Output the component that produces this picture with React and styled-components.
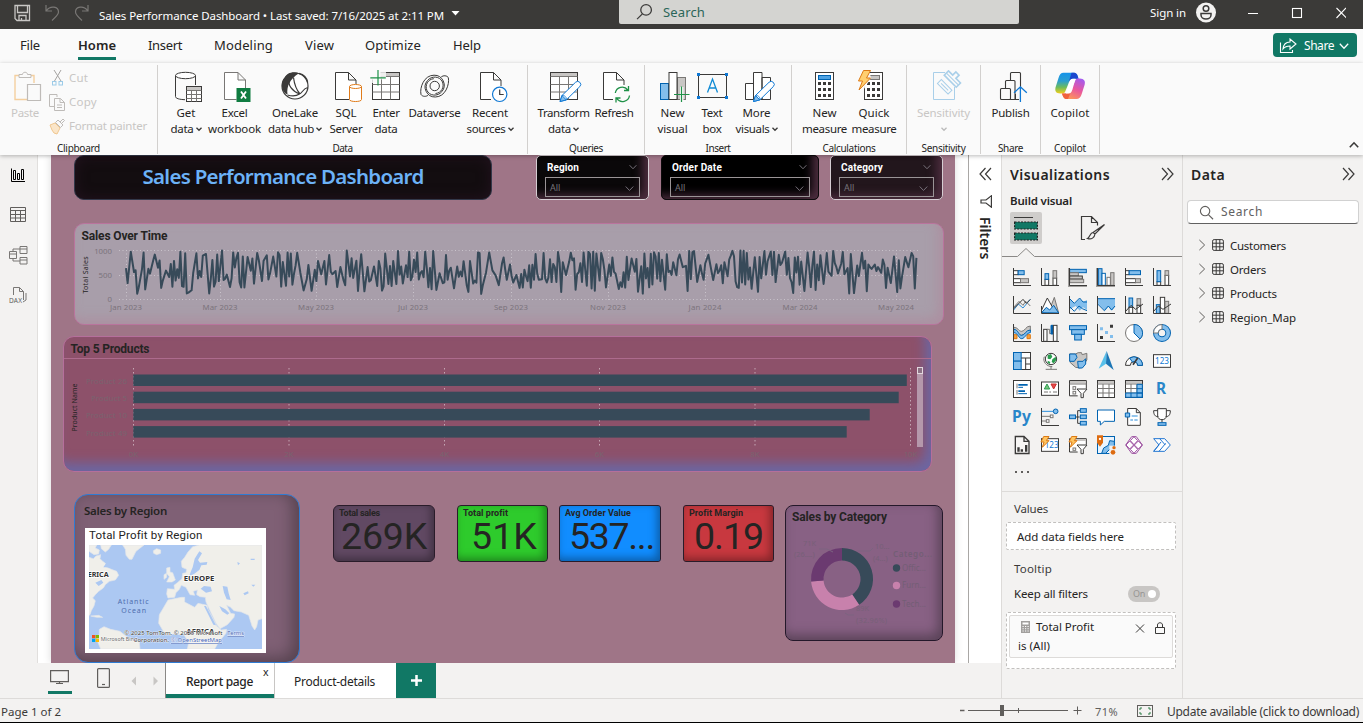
import React, { useLayoutEffect, useRef, useState } from "react";
import styled, { createGlobalStyle, css } from "styled-components";

const INK = "#3b3a39";
const BLUE = "#0063b1";
const SKY = "#83beec";
const GREY = "#797775";
const SILVER = "#c8c6c4";
const GREEN = "#117865";
const TEAL = "#374a59";
const UI = '"Noto Sans", "Open Sans", sans-serif';
const DIN = 'Roboto, "Noto Sans", sans-serif';

const Global = createGlobalStyle`
  * { box-sizing: border-box; }
  body { margin: 0; overflow: hidden; background: #f3f2f1; font-family: ${UI}; color: #252423; }
  svg { display: block; flex: none; }
`;

/* ---------- text that tracks itself to a given width ---------- */
const Span = styled.span`
  display: block;
  width: fit-content;
  flex: none;
  white-space: pre;
  font-family: ${(p) => (p.$din ? DIN : UI)};
  font-size: ${(p) => p.$size || 11.5}px;
  font-weight: ${(p) => p.$weight || 400};
  color: ${(p) => p.$color || "inherit"};
  line-height: ${(p) => p.$lh || 16}px;
`;
function Text({ w, size, weight, color, lh, din, children }) {
  const ref = useRef(null);
  const [spacing, setSpacing] = useState(0);
  useLayoutEffect(() => {
    if (!w) return;
    setSpacing((w - ref.current.getBoundingClientRect().width) / String(children).length);
  }, [w, children]);
  return (
    <Span ref={ref} $size={size} $weight={weight} $color={color} $lh={lh} $din={din} style={{ letterSpacing: spacing }}>
      {children}
    </Span>
  );
}

/* ---------- shell ---------- */
const Shell = styled.div`
  width: 1363px;
  height: 723px;
  display: flex;
  flex-direction: column;
  overflow: hidden;
  background: #f3f2f1;
`;
const Spacer = styled.div`
  flex: ${(p) => (p.$w ? "none" : 1)};
  width: ${(p) => (p.$w ? p.$w + "px" : "auto")};
`;

/* ---------- title bar ---------- */
const TitleBar = styled.header`
  flex: none;
  height: 29px;
  display: flex;
  background: #3b3a38;
  color: #fff;
`;
const TitleLeft = styled.div`
  width: 619px;
  display: flex;
  align-items: flex-start;
  padding: 4px 0 0 13px;
`;
const TitleText = styled.div`
  display: flex;
  align-items: center;
  gap: 7px;
  padding: 3px 0 0 8px;
`;
const TopSearch = styled.div`
  width: 400px;
  height: 24px;
  display: flex;
  align-items: center;
  gap: 10px;
  padding: 0 0 1px 17px;
  background: #d4d4d1;
  border-radius: 0 0 2px 2px;
`;
const TitleRight = styled.div`
  flex: 1;
  height: 25px;
  display: flex;
  align-items: center;
  padding-left: 131px;
`;

/* ---------- menu ---------- */
const Menu = styled.nav`
  flex: none;
  height: 34px;
  display: flex;
  background: #fafafa;
  padding: 4px 6px 0 20px;
`;
const MenuTab = styled.div`
  width: ${(p) => p.$w}px;
  margin-right: ${(p) => p.$gap}px;
  height: 27px;
  padding-top: 2px;
  border-bottom: 3px solid ${(p) => (p.$on ? GREEN : "transparent")};
`;
const ShareButton = styled.button`
  width: 84px;
  height: 24px;
  display: flex;
  align-items: center;
  padding: 1px 8px 0 6px;
  border: 0;
  border-radius: 4px;
  background: ${GREEN};
  color: #fff;
`;

/* ---------- ribbon ---------- */
const Ribbon = styled.section`
  flex: none;
  height: 92px;
  display: flex;
  background: #fafafa;
  z-index: 2;
  box-shadow: 0 1px 4px rgba(0, 0, 0, 0.28);
`;
const Group = styled.div`
  width: ${(p) => p.$w}px;
  height: 89px;
  margin-top: 2px;
  display: flex;
  flex-direction: column;
  align-items: center;
  border-right: 1px solid #d2d0ce;
`;
const GroupBody = styled.div`
  height: 74px;
  width: 100%;
  flex: none;
  display: flex;
  padding: 5px 0 0 ${(p) => p.$pad || 0}px;
  justify-content: ${(p) => (p.$pad ? "flex-start" : "center")};
`;
const Button = styled.div`
  width: ${(p) => p.$w}px;
  flex: none;
  display: flex;
  flex-direction: column;
  align-items: center;
  color: ${(p) => (p.$off ? "#c8c6c4" : "#252423")};
  > svg { margin-bottom: 1px; }
`;
const ButtonLine = styled.div`
  height: 16px;
  display: flex;
  align-items: center;
  gap: 2px;
`;
const SideActions = styled.div`
  display: flex;
  flex-direction: column;
  margin: -4px 0 0 4px;
`;
const SideAction = styled.div`
  height: 24px;
  display: flex;
  align-items: center;
  gap: 4px;
`;
const CollapseSlot = styled.div`
  flex: 1;
  display: flex;
  align-items: flex-end;
  justify-content: flex-end;
  padding: 0 4px 5px 0;
`;

function Chevron({ size = 7, color = INK, sw = 1.3, dir = "down" }) {
  const rot = { down: 0, up: 180, right: -90, left: 90 }[dir];
  return (
    <svg width={size} height={size} viewBox="0 0 10 10" fill="none" stroke={color} strokeWidth={(sw * 10) / size}>
      <path d="M.8 2.8 5 7.2 9.2 2.8" transform={`rotate(${rot} 5 5)`} />
    </svg>
  );
}

const Pencil = ({ x }) => (
  <g transform={`translate(${x} 0)`}>
    <path d="M0 31.5 2 25.5 15.5 12.3a3 3 0 0 1 4.3 4.3L6.3 29.9Z" fill="#fff" stroke="#0f78d4" />
    <path d="M0 31.5 2 25.5 6.3 29.9Z" fill={SKY} stroke="#0f78d4" />
    <path d="M2 25.5c2.2-.6 5 1.6 4.3 4.4" fill="none" stroke="#0f78d4" strokeWidth=".8" />
  </g>
);
const Calc = ({ x, top = "#4ea2e3" }) => (
  <g>
    <rect x={x} y="2.5" width="18" height="27" fill="#fff" stroke={INK} />
    <rect x={x + 3} y="5.5" width="12" height="4" fill={top} stroke={top === SILVER ? GREY : BLUE} />
    {[12, 18, 24].map((y) =>
      [3, 8, 13].map((dx) => <rect key={y + "-" + dx} x={x + dx - 0.5} y={y} width="3" height="3" fill={INK} />)
    )}
  </g>
);

const ribbonArt = {
  get: (
    <>
      <path d="M9.5 5.5v21c0 2 4 3 9.5 3.2M29.5 5.5V15" fill="none" stroke={INK} />
      <ellipse cx="19.5" cy="5.5" rx="10" ry="3.2" fill="#fff" stroke={INK} />
      <rect x="20.5" y="16.5" width="15" height="15" fill="#fff" stroke={INK} />
      <path d="M21 17h14v3H21z" fill={SILVER} />
      <path d="M20.5 20.5h15M20.5 24.5h15M20.5 28.5h15M25.5 20v11.5M30.5 20v11.5" stroke={GREY} />
    </>
  ),
  excel: (
    <>
      <path d="M21.5 29.5H9.5v-27H23l7.500 7.500v8M23 2.500V10h7.500" fill="#fff" stroke={GREY} />
      <rect x="21.5" y="18" width="14" height="14" fill="#107c41" />
      <path d="m26 21.500 5 7M31 21.500l-5 7" stroke="#fff" strokeWidth="1.8" />
    </>
  ),
  onelake: (
    <>
      <circle cx="20" cy="16" r="13" fill="#fff" stroke={INK} strokeWidth="1.2" />
      <path d="M24 3.300C19 1 11 2.500 9.500 8.500 5 12 6.500 23 12.500 24.500c-1-8 2-15 11.500-21.200Z" fill={INK} />
      <path d="M14.500 9.500c-2 5.500 2.500 11.500 10 14.500 3-1 3-5 8.200-6.500M18.500 7.500c1 8 3.500 13 6.500 16.500M24 3.300c5 1.200 8 5 8.700 9M12.500 25c5 1.500 9 1 12-1" fill="none" stroke={INK} strokeWidth="1.2" />
    </>
  ),
  sql: (
    <>
      <path d="M23 29.500H9.500v-27h13l7.500 7.500v4M22.500 2.500V10H30" fill="#fff" stroke={INK} />
      <path d="M23.500 16.500v13c0 2.700 12 2.700 12 0v-13" fill="#fff" stroke="#e07b1a" />
      <ellipse cx="29.5" cy="16.5" rx="6" ry="2" fill="#fff" stroke="#e07b1a" />
    </>
  ),
  enter: (
    <>
      <rect x="6.5" y="2.5" width="27" height="27" fill="#fff" stroke={INK} />
      <path d="M7 3h26v3.500H7z" fill={SILVER} />
      <path d="M6.500 6.500h27M6.500 14.500h27M6.500 22h27M15.500 6.500v23M24.500 6.500v23" stroke={GREY} />
      <path d="M4 1h10.500v8.500H4z" fill="#fafafa" />
      <path d="M14 1h6v8.500h-6zM4 9h10.500v4H4z" fill="#fafafa" opacity=".8" />
      <path d="M12 0v15.500M4.300 7.800h15.500" stroke="#1f9148" strokeWidth="1.2" />
    </>
  ),
  dataverse: (
    <g fill="none" stroke={INK}>
      <path d="M33.300 7.500c1.500 7-3 19.500-13 19.500a10 10 0 0 1-7.800-16.500c4-5 12.500-4.500 15 1.500 2 5-1 11-7 11.500M6 24.500C4.500 17.500 9 5.200 19 5.200a10 10 0 0 1 7.800 16.500c-4 5-12.500 4.500-15-1.500-2-5 1-11 7-11.500" />
      <path d="M26.300 6.800c2-1.500 5.500-1.500 7 .7M13 25.300c-2 1.500-5.500 1.500-7-.8" />
      <circle cx="19.7" cy="16" r="4.7" />
    </g>
  ),
  recent: (
    <>
      <path d="M21 29.500H10.500v-27h13L31 10v6M23.500 2.500V10H31" fill="#fff" stroke={INK} />
      <circle cx="29.7" cy="24.3" r="7.2" fill="#fff" stroke="#0f78d4" strokeWidth="1.2" />
      <path d="M29.700 19.500v5h4" fill="none" stroke={INK} strokeWidth="1.2" />
    </>
  ),
  transform: (
    <>
      <rect x="6.5" y="2.5" width="27" height="27" fill="#fff" stroke={INK} />
      <path d="M7 3h26v3.500H7z" fill={SILVER} />
      <path d="M6.500 6.500h27M6.500 14.500h27M6.500 22h27M15.500 6.500v23M24.500 6.500v23" stroke={GREY} />
      <Pencil x={16} />
    </>
  ),
  refresh: (
    <>
      <path d="M19 29.500H9.500v-27h13L30 10v5M22.500 2.500V10H30" fill="#fff" stroke={INK} />
      <path d="M21.300 23a7 7 0 0 1 12.500-3M35.500 25.500a7 7 0 0 1-12.700 3M34.500 16v4.500H30M22 32.500V28h4.500" fill="none" stroke="#1f9148" strokeWidth="1.3" />
    </>
  ),
  newVisual: (
    <>
      <rect x="24.5" y="7.5" width="8" height="22" fill={SILVER} stroke={GREY} />
      <rect x="7.5" y="13.5" width="8" height="16" fill={SKY} stroke={BLUE} />
      <rect x="16" y="2.5" width="8" height="27" fill="#fff" stroke={INK} />
      <path d="M27 17h3.500v13H27z" fill="#fafafa" />
      <path d="M28.500 16.500V32M21 24.500h15.500" stroke="#1f9148" strokeWidth="1.2" />
    </>
  ),
  textBox: (
    <>
      <rect x="6.500" y="4.5" width="28" height="23" fill="#fafafa" stroke={INK} />
      <path d="M5 3h3v3H5zM33 3h3v3h-3zM5 26h3v3H5zM33 26h3v3h-3z" fill="#0f78d4" />
      <path d="m15.500 22.500 5-13.500 5 13.500M17.200 18h6.700" fill="none" stroke="#0f8ad4" strokeWidth="1.3" />
    </>
  ),
  moreVisuals: (
    <>
      <path d="M8.500 13.500h8v16h-8zM16.500 2.500h8.500v27h-8.500zM25 7.500h8.500v22H25z" fill="#fff" stroke={INK} />
      <Pencil x={16.5} />
    </>
  ),
  measure: <Calc x={10.5} />,
  quick: (
    <>
      <Calc x={10.5} top={SILVER} />
      <path d="M3 0h12l2 8-9 14H3z" fill="#fafafa" opacity=".95" />
      <path d="M9.500.5h7L12.500 8h4L5 20l3.500-9h-4Z" fill="#ffcf70" stroke="#dd7a14" />
    </>
  ),
  sensitivity: (
    <g fill="none" stroke="#a9cfe9">
      <path d="M21 2.500H9.500v27h21V17" />
      <g transform="rotate(45 20.500 17)"><rect x="13" y="14" width="15" height="5.5" /><path d="M15.500 16.800h10" /></g>
      <g transform="rotate(45 28 8)">
        <path d="M20.500 5.500h6V1h4.500v4.500h6.500v6h-17z" strokeWidth="1.6" /><path d="M21 8.500h16" />
      </g>
    </g>
  ),
  publish: (
    <>
      <g fill="#fafafa" stroke={INK} strokeWidth="1.1">
        <path d="M19.500 29.500v-26q0-1 1-1h8q1 0 1 1v26z" />
        <path d="M14.500 29.500v-18q0-1 1-1h7.500q1 0 1 1v18z" />
        <rect x="9.5" y="18.5" width="10" height="11" rx="1" />
      </g>
      <path d="M25.500 17h9v15h-9z" fill="#fafafa" />
      <path d="M29.400 17v15M23 22.800l6.400-6 6.400 6" fill="none" stroke="#0f78d4" strokeWidth="1.3" />
      <path d="M24.500 24v5.500H28" fill="none" stroke={INK} />
    </>
  ),
  copilot: (
    <>
      <defs>
        <linearGradient id="cpA" x1="0" y1="0" x2="0" y2="1">
          <stop offset="0" stopColor="#1593ea" /><stop offset=".4" stopColor="#2b9ed0" /><stop offset=".7" stopColor="#6dbb5c" /><stop offset="1" stopColor="#f2cf1b" />
        </linearGradient>
        <linearGradient id="cpB" x1=".8" y1="0" x2=".3" y2="1">
          <stop offset="0" stopColor="#a35bf0" /><stop offset=".5" stopColor="#e9589d" /><stop offset="1" stopColor="#ff9a55" />
        </linearGradient>
      </defs>
      <g transform="translate(-.5 0)">
        <path d="M14 2.700h9.500c3 0 4.500 1.500 5.500 6h-5c-3 0-4.500 2-5.500 6L15.500 22c-.6 1-2 1.500-3 1.500-5 0-7.500-1-6.500-6l3-9.500c1-3.500 2.500-5.300 5-5.300Z" fill="url(#cpA)" />
        <path d="M22 2.700h2c3 0 4 1.500 5 6h-5c-2.500 0-4 1.500-5 4Z" fill="#1b48cf" />
        <path d="M27 29h-9.500c-3 0-4-2-5-5.500h4.500c3 0 4.500-2 5.500-6L26 10c.5-1 1.500-1.500 2.500-1.500 5 0 7.700 1 6.700 6l-3 9.500c-1 3.500-2.700 5-5.200 5Z" fill="url(#cpB)" />
        <path d="M12.500 23.500h4.500c2.500 0 4-1 5-3.500L18.500 29h-1c-3 0-4-2-5-5.500Z" fill="#f0623c" />
        <path d="M20.500 10.500q.8-1.700 2.500-1.700h3l-3 10.500-1 2.500q-.8 1.700-2.500 1.700h-3Z" fill="#fff" />
      </g>
    </>
  ),
};

function RibbonButton({ w, icon, lines, off, arrow }) {
  return (
    <Button $w={w} $off={off}>
      <svg width="40" height="34" viewBox="0 0 40 34">{ribbonArt[icon]}</svg>
      {lines.map(([t, tw], i) => (
        <ButtonLine key={i}>
          {t && <Text w={tw}>{t}</Text>}
          {arrow && i === lines.length - 1 && <Chevron size={6} color={off ? "#bbb" : INK} />}
        </ButtonLine>
      ))}
    </Button>
  );
}
function RibbonGroup({ w, pad, name, nameWidth, children }) {
  return (
    <Group $w={w}>
      <GroupBody $pad={pad}>{children}</GroupBody>
      <Text w={nameWidth} size={10} lh={18}>{name}</Text>
    </Group>
  );
}

/* ---------- workspace ---------- */
const Main = styled.main`
  flex: 1;
  min-height: 0;
  display: flex;
`;
const Center = styled.div`
  width: 1001px;
  display: flex;
  flex-direction: column;
`;
const Stage = styled.div`
  height: 508px;
  display: flex;
  background: #fff;
`;
const Rail = styled.div`
  width: 38px;
  display: flex;
  flex-direction: column;
  align-items: center;
  background: #f3f2f1;
  border-right: 1px solid #e1dfdd;
  padding: 11px 2px 0 0;
`;
const RailSlot = styled.div`
  height: 40px;
  svg { margin-left: 1px; }
`;
const Report = styled.div`
  width: 904px;
  margin: 0 13px;
  display: flex;
  flex-direction: column;
  background: #9f7587;
  box-shadow: 0 0 8px rgba(0, 0, 0, 0.15);
  overflow: hidden;
`;
const FilterPane = styled.div`
  width: 33px;
  display: flex;
  flex-direction: column;
  align-items: center;
  border-left: 1px solid #a9a7a5;
  padding-top: 12px;
  gap: 14px;
`;
const FilterIcon = styled.div`
  margin-left: 2px;
`;
const FilterLabel = styled.div`
  writing-mode: vertical-rl;
  font-size: 14px;
  font-weight: 600;
  line-height: 16px;
  letter-spacing: 0;
  margin-top: -5px;
`;

const Row = styled.div`
  display: flex;
  flex: none;
  height: ${(p) => p.$h}px;
  margin: ${(p) => p.$m};
`;
const card = css`
  flex: none;
  border: 1px solid;
  overflow: hidden;
`;
const Banner = styled.div`
  ${card}
  width: 418px;
  height: 45px;
  border-color: #33384a;
  border-radius: 10px;
  background: #130d10;
  box-shadow: inset 0 0 14px #23131f;
  display: flex;
  justify-content: center;
  padding-top: 4px;
`;
const Slicer = styled.div`
  ${card}
  width: ${(p) => p.$w}px;
  margin-left: ${(p) => p.$ml}px;
  height: 45px;
  border-radius: 5px;
  border-color: ${(p) => p.$line};
  background: ${(p) => p.$bg};
  box-shadow: inset -8px -6px 10px -2px #4b2c3d;
  padding: 5px 8px 0 8px;
  color: #fff;
`;
const SlicerHead = styled.div`
  display: flex;
  justify-content: space-between;
  align-items: flex-start;
  height: 16px;
  padding: 0 3px 0 2px;
  svg { margin-top: 2px; }
`;
const SlicerField = styled.div`
  height: 20px;
  border: 1px solid #9a9496;
  display: flex;
  align-items: center;
  justify-content: space-between;
  padding: 2px 5px 0 4px;
`;
const LineCard = styled.div`
  ${card}
  width: 870px;
  height: 102px;
  border-radius: 10px;
  border-color: #b9749d;
  background: #a89eaa;
  box-shadow: inset -5px -5px 12px rgba(174, 139, 158, 0.75);
`;
const BarCard = styled.div`
  ${card}
  width: 869px;
  height: 136px;
  border-radius: 11px;
  border-color: #b56f9b;
  background: #8d516a;
  box-shadow: inset -7px -9px 12px -1px #6c66a2;
`;
const RegionCard = styled.div`
  ${card}
  width: 226px;
  height: 169px;
  border-radius: 14px;
  border-color: #2f7bd3;
  background: #7f6075;
  box-shadow: inset -6px -4px 16px #56424f;
  padding: 8px 0 0 9px;
`;
const MapCard = styled.div`
  width: 181px;
  height: 125px;
  display: flex;
  flex-direction: column;
  gap: 3px;
  background: #fff;
  padding: 0 4px;
  margin: 9px 0 0 1px;
`;
const Kpi = styled.div`
  ${card}
  width: ${(p) => p.$w}px;
  margin: 11px 0 0 ${(p) => p.$ml}px;
  height: 57px;
  border-color: #2a1c2a;
  border-radius: ${(p) => p.$r}px;
  background: ${(p) => p.$bg};
  box-shadow: inset -3px -3px 9px rgba(0, 0, 0, 0.35);
  display: flex;
  flex-direction: column;
  padding: 1px 0 0 5px;
`;
const KpiValue = styled.div`
  height: 38px;
  padding-left: ${(p) => p.$in}px;
  margin-top: -3px;
`;
const CategoryCard = styled.div`
  ${card}
  width: 158px;
  height: 136px;
  margin: 11px 0 0 11px;
  border-color: #24182a;
  border-radius: 8px;
  background: #886184;
  box-shadow: inset -4px -5px 12px #5a4358;
`;

/* ---------- charts ---------- */
function makeSeries() {
  let seed = 20230;
  const rnd = () => {
    seed = (seed * 1103515245 + 12345) % 2147483648;
    return seed / 2147483648;
  };
  const pts = [];
  let x = 0;
  let high = false;
  while (x < 792) {
    high = rnd() < 0.72 ? !high : high;
    const v = high ? 560 + Math.pow(rnd(), 0.85) * 440 : 110 + rnd() * 460;
    pts.push([x, v]);
    x += rnd() < 0.72 ? 1.6 : 3.2;
  }
  return pts;
}
const series = makeSeries();
const months = [
  ["Jan 2023", 52, 32], ["Mar 2023", 146, 35], ["May 2023", 242, 36], ["Jul 2023", 339, 30], ["Sep 2023", 437, 34],
  ["Nov 2023", 534, 36], ["Jan 2024", 631, 33], ["Mar 2024", 726, 35], ["May 2024", 822, 36],
];
function SalesLine() {
  return (
    <svg width="868" height="100" viewBox="1 1 868 100" fontFamily={UI} fontSize="7.8" fill="#7b737c">
      <text x="7.5" y="16.5" fontFamily={DIN} fontSize="12" fontWeight="700" fill="#252423" textLength="86">Sales Over Time</text>
      <g stroke="#c9c3cb" strokeDasharray="1 2.5">
        <path d="M45 27.500h801M45 52.500h801M45 76.500h801" />
        {months.map(([m, x]) => <path key={m} d={`M${x + 0.5} 27v50`} />)}
      </g>
      <text x="38" y="30.5" textAnchor="end">1000</text>
      <text x="38" y="55" textAnchor="end">500</text>
      <text x="38" y="79" textAnchor="end">0</text>
      {months.map(([m, x, w]) => <text key={m} x={x} y="87" textAnchor="middle" textLength={w}>{m}</text>)}
      <text transform="translate(14 70.500) rotate(-90)" fill="#252423" fontSize="7" textLength="37">Total Sales</text>
      <polyline
        fill="none" stroke={TEAL} strokeWidth="2" strokeLinejoin="round"
        points={series.map(([x, v]) => `${(52 + x).toFixed(1)},${(76.5 - v * 0.049).toFixed(1)}`).join(" ")}
      />
    </svg>
  );
}

const products = [["Product 26", 843.8, 41], ["Product 5", 835.7, 36], ["Product 10", 806.7, 41], ["Product 49", 783.7, 41]];
function ProductBars() {
  const grid = [["0K", 70.5], ["2K", 226], ["4K", 381.5], ["6K", 536.5], ["8K", 692], ["10K", 847.5]];
  return (
    <svg width="867" height="134" viewBox="1 1 867 134" fontFamily={UI} fontSize="7.8" fill="#79646f">
      <text x="7.5" y="16.5" fontFamily={DIN} fontSize="12" fontWeight="700" fill="#252423" textLength="79">Top 5 Products</text>
      <path d="M0 22.500h869" stroke="#ad6b8d" />
      {grid.map(([t, x]) => (
        <g key={t}>
          <path d={`M${x} 32v80`} stroke="#c4a7b4" strokeDasharray="1.5 2.5" />
          <text x={x} y="121.3" textAnchor="middle">{t}</text>
        </g>
      ))}
      {products.map(([t, end, w], i) => (
        <g key={t}>
          <rect x="70.3" y={38.5 + i * 17.2} width={end - 70.3} height="11.5" fill={TEAL} />
          <text x="64" y={47.5 + i * 17.4} textAnchor="end" textLength={w}>{t}</text>
        </g>
      ))}
      <text transform="translate(14 95.500) rotate(-90)" fill="#252423" fontSize="7" textLength="48">Product Name</text>
      <rect x="854" y="31" width="6" height="80" fill="#b598ab" />
      <rect x="854.5" y="31.5" width="5" height="6" fill="#8c7184" stroke="#e3d8df" />
    </svg>
  );
}

const land = [
  "M147 232 160 236 168 228 182 224 180 236 188 244 203 255 200 262 214 268 230 274 236 286 226 300 208 304 196 314 190 324 176 334 166 344 158 354 166 362 162 378 154 392 150 404 147 406Z",
  "M147 195 170 195 166 204 178 210 176 222 162 224 147 214ZM182 195 214 195 206 208 196 216 184 206ZM248 195 312 195 298 206 288 214 276 238 268 238 258 226 256 208Z",
  "M340 212 350 206 362 210 362 220 350 224 341 220ZM380 264 390 262 390 276 398 278 406 300 396 306 380 306 388 290 380 280ZM372 284 380 280 380 292 372 298Z",
  "M382 326 404 328 402 316 412 308 426 296 428 280 438 278 440 268 426 262 424 244 434 232 444 216 458 200 478 195 666 195 666 416 654 420 650 440 644 450 636 438 626 406 604 396 582 392 572 382 560 376 572 400 584 402 582 412 562 434 540 446 528 430 512 396 498 366 496 352 480 350 470 344 472 330 460 334 464 346 450 344 438 322 424 316 418 328 408 338 404 352 384 354 380 342Z",
  "M384 360 424 352 434 352 434 366 464 382 474 370 502 376 504 388 518 414 530 438 544 450 560 448 558 460 536 486 524 507 442 507 446 488 432 464 400 462 376 464 356 430 358 404 370 384Z",
  "M178 448 192 440 212 448 240 454 250 462 268 476 298 486 300 507 182 507 170 478 178 462ZM152 408 176 406 188 412 170 412Z",
];
function RegionMap() {
  return (
    <svg width="173" height="104" viewBox="147 195 519 312" fontFamily={UI} overflow="hidden">
      <rect x="147" y="195" width="519" height="312" fill="#acc8f2" />
      <g fill="#f0efea" stroke="#e2e6ea" strokeWidth="2">{land.map((d) => <path key={d} d={d} />)}</g>
      <g fill="#acc8f2">
        <path d="M458 262 464 236 478 214 486 220 474 240 480 248 502 246 500 254 484 256 478 270 462 282 448 288 452 276ZM482 326 492 318 512 320 516 334 498 338ZM548 318 562 320 566 340 572 360 560 358 552 338ZM492 378 498 378 528 436 520 434ZM538 378 556 388 568 400 562 404 546 394ZM634 314 646 314 640 320ZM592 246 600 250 594 256Z" />
        <path d="M190 262 198 250 190 238 200 234 212 250 208 262ZM166 308 184 300 190 308 176 318ZM632 236h12v4h-12ZM610 340l14-6 2 6-12 6Z" />
      </g>
      <g fontWeight="700" fontSize="23" fill="#333" stroke="#fff" strokeWidth="4" paintOrder="stroke">
        <text x="143" y="290" textLength="63" lengthAdjust="spacingAndGlyphs">ERICA</text>
        <text x="431" y="302" textLength="92" lengthAdjust="spacingAndGlyphs">EUROPE</text>
        <text x="439" y="462" textLength="84" lengthAdjust="spacingAndGlyphs">AFRICA</text>
      </g>
      <g fontSize="21" fill="#4e6eae">
        <text x="233" y="372" textLength="93">Atlantic</text>
        <text x="244" y="398" textLength="74">Ocean</text>
      </g>
      <path d="M156 465h10v10h-10z" fill="#f25022" /><path d="M167 465h10v10h-10z" fill="#7fba00" />
      <path d="M156 476h10v10h-10z" fill="#00a4ef" /><path d="M167 476h10v10h-10z" fill="#ffb900" />
      <g fontSize="18" fill="#333" stroke="#fff" strokeWidth="2" paintOrder="stroke">
        <text x="182" y="482" textLength="110" lengthAdjust="spacingAndGlyphs" fill="#666">Microsoft Bing</text>
        <text x="253" y="465" textLength="294" lengthAdjust="spacingAndGlyphs">© 2025 TomTom, © 2025 Microsoft</text>
        <text x="281" y="486" textLength="106" lengthAdjust="spacingAndGlyphs">Corporation,</text>
        <text x="393" y="486" textLength="153" lengthAdjust="spacingAndGlyphs" fill="#4363b5" textDecoration="underline">© OpenStreetMap</text>
        <text x="562" y="465" textLength="50" lengthAdjust="spacingAndGlyphs" fill="#4363b5" textDecoration="underline">Terms</text>
      </g>
    </svg>
  );
}

function arc(cx, cy, ro, ri, a0, a1) {
  const p = (r, a) => `${(cx + r * Math.sin(a)).toFixed(2)} ${(cy - r * Math.cos(a)).toFixed(2)}`;
  const big = a1 - a0 > Math.PI ? 1 : 0;
  return `M${p(ro, a0)}A${ro} ${ro} 0 ${big} 1 ${p(ro, a1)}L${p(ri, a1)}A${ri} ${ri} 0 ${big} 0 ${p(ri, a0)}Z`;
}
function CategoryDonut() {
  const T = Math.PI * 2;
  const legend = [["Offic...", 63, TEAL], ["Furn...", 80.5, "#c881ac"], ["Tech...", 99, "#6b3a70"]];
  return (
    <svg width="156" height="134" viewBox="1 1 156 134" fontFamily={UI} fontSize="7.4" fill="#776078">
      <text x="7" y="15.5" fontFamily={DIN} fontSize="12" fontWeight="700" fill="#252423" textLength="95">Sales by Category</text>
      <path d={arc(57, 74, 31, 18.5, 0, 0.407 * T)} fill={TEAL} />
      <path d={arc(57, 74, 31, 18.5, 0.407 * T, 0.737 * T)} fill="#c881ac" />
      <path d={arc(57, 74, 31, 18.5, 0.737 * T, T)} fill="#6b3a70" />
      <path d="M34 44h8l6 3M72 46h13l3-3M60 108l3 2h6" fill="none" stroke="#7c6480" />
      <text x="18" y="41">71K</text><text x="9" y="52">(26....)</text>
      <text x="90" y="44">10...</text><text x="88" y="56">(4...)</text>
      <text x="71" y="106">89K</text><text x="71" y="118" textLength="31">(32.96%)</text>
      <g fill="#735e75" fontSize="8">
        <text x="108" y="51.5" fontWeight="600" textLength="39">Catego...</text>
        {legend.map(([t, y, c]) => (
          <g key={t}>
            <circle cx="111.5" cy={y} r="3.7" fill={c} />
            <text x="117" y={y + 2.5} textLength="24">{t}</text>
          </g>
        ))}
      </g>
    </svg>
  );
}

function SlicerBox({ w, ml, label, lw, line, bg }) {
  return (
    <Slicer $w={w} $ml={ml} $line={line} $bg={bg}>
      <SlicerHead>
        <Text din size={10} weight={700} w={lw} lh={14}>{label}</Text>
        <Chevron size={8} color="#77717a" sw={1} />
      </SlicerHead>
      <SlicerField>
        <Text size={9} color="#77737a" lh={14}>All</Text>
        <Chevron size={9} color="#77717a" sw={1} />
      </SlicerField>
    </Slicer>
  );
}
function KpiBox({ w, ml, r, bg, label, lw, value, vw, inset }) {
  return (
    <Kpi $w={w} $ml={ml} $r={r} $bg={bg}>
      <Text din size={9} weight={700} w={lw} lh={13} color="#252423">{label}</Text>
      <KpiValue $in={inset}><Text din size={37.5} w={vw} lh={38}>{value}</Text></KpiValue>
    </Kpi>
  );
}

/* ---------- page tabs ---------- */
const TabBar = styled.div`
  height: 35px;
  display: flex;
  background: #f3f2f1;
`;
const LayoutButton = styled.div`
  width: ${(p) => p.$w}px;
  height: 31px;
  display: flex;
  justify-content: center;
  padding-top: ${(p) => p.$top}px;
  border-bottom: ${(p) => (p.$on ? `3px solid ${GREEN}` : "0")};
`;
const PageTab = styled.div`
  width: ${(p) => p.$w}px;
  display: flex;
  padding: 11px 0 0 ${(p) => (p.$on ? 20 : 19)}px;
  background: #fff;
  border-left: 1px solid ${(p) => (p.$on ? "#8a8886" : "#c8c6c4")};
  box-shadow: ${(p) => (p.$on ? `inset 0 -4px 0 ${GREEN}` : "none")};
`;
const CloseMark = styled.span`
  font-size: 10.5px;
  line-height: 10px;
  margin: -7px 0 0 10px;
`;
const AddTab = styled.button`
  width: 40px;
  height: 35px;
  border: 0;
  padding: 0 0 1px;
  display: flex;
  align-items: center;
  justify-content: center;
  background: ${GREEN};
`;

/* ---------- side panes ---------- */
const Pane = styled.aside`
  width: 181px;
  flex: none;
  display: flex;
  flex-direction: column;
  border-left: 1px solid #dddbd9;
  background: #f3f2f1;
`;
const PaneHead = styled.div`
  height: 38px;
  display: flex;
  align-items: center;
  justify-content: space-between;
  padding: 0 ${(p) => p.$r}px 0 8px;
  > span { padding-top: 1px; }
`;
const ModeRow = styled.div`
  display: flex;
  height: 32px;
  margin: 3px 0 3px 8px;
  gap: 35px;
`;
const Mode = styled.div`
  width: 32px;
  height: 32px;
  display: flex;
  align-items: center;
  justify-content: center;
  background: ${(p) => (p.$on ? "#cfcdcb" : "transparent")};
  border-radius: 2px;
`;
const Gallery = styled.div`
  display: grid;
  grid-template-columns: repeat(6, 28px);
  grid-auto-rows: 28px;
  place-items: center;
  margin: 6px 0 0 6px;
`;
const Dots = styled.div`
  display: flex;
  gap: 4px;
  margin: 12px 0 0 13px;
  i { width: 2px; height: 2px; background: #605e5c; }
`;
const Wells = styled.div`
  flex: 1;
  margin-top: 18px;
  border-top: 1px solid #dddbd9;
  padding: 8px 6px 0 4px;
  color: #3b3a39;
`;
const WellLabel = styled.div`
  display: flex;
  align-items: center;
  justify-content: space-between;
  height: 17px;
  padding: 0 16px 0 8px;
  margin: ${(p) => p.$mt || 0}px 0 ${(p) => p.$mb || 0}px;
`;
const Well = styled.div`
  width: 170px;
  height: ${(p) => p.$h}px;
  padding: ${(p) => p.$p};
  background: #fff;
  border: 1px dashed #c2c0be;
  border-radius: 2px;
`;
const Toggle = styled.div`
  width: 32px;
  height: 16px;
  border-radius: 8px;
  background: #c8c6c4;
  display: flex;
  align-items: center;
  gap: 2px;
  padding-left: 5px;
  i { width: 8px; height: 8px; border-radius: 50%; background: #fff; margin-left: 1px; }
`;
const FieldCard = styled.div`
  width: 164px;
  height: 43px;
  background: #fafafa;
  border: 1px solid #dddbd9;
  border-radius: 2px;
  padding: 2px 7px 0 8px;
`;
const FieldTop = styled.div`
  display: flex;
  align-items: center;
  height: 18px;
  padding-left: 3px;
`;
const SearchBox = styled.div`
  width: 172px;
  height: 24px;
  margin: 7px 0 0 4px;
  display: flex;
  align-items: center;
  gap: 7px;
  padding: 0 0 0 11px;
  background: #fff;
  border: 1px solid #d1d1d1;
  border-bottom-color: #616161;
  border-radius: 4px;
`;
const Tables = styled.div`
  padding: 9px 0 0 13px;
`;
const TableRow = styled.div`
  height: 24px;
  display: flex;
  align-items: center;
  > span { padding-top: 1px; }
`;

/* ---------- status bar ---------- */
const Status = styled.footer`
  flex: none;
  height: 25px;
  display: flex;
  align-items: center;
  border-top: 1px solid #dddbd9;
  border-bottom: 1px solid #000;
  padding: 1px 0 0 1px;
  color: #3b3a39;
  > span { padding-top: 1px; }
`;

/* ---------- visual gallery icons, 54-unit grid ---------- */
const axes = <path d="M1.500 0v52.500H54" fill="none" stroke={INK} strokeWidth="3" />;
const R = ({ x, y, w, h, f = "#fff", s = INK }) => <rect x={x} y={y} width={w} height={h} fill={f} stroke={s} strokeWidth="3" />;
const P = ({ d, f = "none", s = INK, sw = 3 }) => <path d={d} fill={f} stroke={s} strokeWidth={sw} />;
const bolt = <path d="M8 1.500h16L16 14h8L4 34 9 18H0Z" fill="#ffc560" stroke="#dd7a14" strokeWidth="3" />;
const tableGrid = (
  <>
    <R x={1.5} y={1.5} w={51} h={51} />
    <path d="M3 3h48v7H3z" fill={SILVER} />
    <P d="M1.500 12h51M1.500 25.500h51M1.500 39h51M18 12v40M36 12v40" s={GREY} />
  </>
);
const funnel = <P d="M24 27h30L43 40v13h-7V40Z" f="#fff" />;
const num = (x, y) => <text x={x} y={y} fontFamily={UI} fontSize="27" fill="#0f78d4" textLength="42" lengthAdjust="spacingAndGlyphs">123</text>;
const gallery = [
  <><R x={1.5} y={8} w={14} h={12} /><R x={15.5} y={8} w={18} h={12} f={SKY} s={BLUE} /><R x={1.5} y={32} w={21} h={12} /><R x={22.5} y={32} w={24} h={12} f={SILVER} s={GREY} />{axes}</>,
  <><R x={12} y={34} w={11} h={18} /><R x={12} y={17} w={11} h={17} f={SKY} s={BLUE} /><R x={36} y={30} w={11} h={22} /><R x={36} y={8} w={11} h={22} f={SILVER} s={GREY} />{axes}</>,
  <><P d="M0 0v54h54" s="#a19f9d" sw={6} /><R x={2} y={4} w={50} h={10} f={SKY} s={BLUE} /><R x={2} y={14} w={26} h={10} f={SILVER} s={GREY} /><R x={2} y={24} w={38} h={9} f={SILVER} /><R x={2} y={34} w={42} h={10} f={SILVER} s={GREY} />{axes}</>,
  <><P d="M0 0v54h54" s="#a19f9d" sw={6} /><R x={4} y={2} w={11} h={50} f={SKY} s={BLUE} /><R x={15} y={16} w={10} h={36} f="#fff" s={BLUE} /><R x={30} y={28} w={10} h={24} f="#fff" s={GREY} /><R x={41} y={14} w={10} h={38} f={SILVER} s={GREY} />{axes}</>,
  <><R x={1.5} y={8} w={11} h={12} /><R x={12.5} y={8} w={34} h={12} f={SKY} s={BLUE} /><R x={1.5} y={32} w={30} h={12} /><R x={31.5} y={32} w={15} h={12} f={SILVER} s={GREY} />{axes}</>,
  <><R x={12} y={41} w={11} h={11} /><R x={12} y={8} w={11} h={33} f={SKY} s={BLUE} /><R x={36} y={22} w={11} h={30} /><R x={36} y={8} w={11} h={14} f={SILVER} s={GREY} />{axes}</>,
  <><P d="M2 42 16 24l14 12L52 10" s="#2a8ddb" /><P d="M2 34 18 16l12 12L38 16l14 14" s={GREY} /><P d="M2 38 30 10l10 12 12-12" />{axes}</>,
  <><P d="M22 51 40 4l13 47Z" f={SILVER} s={GREY} /><P d="M2 42 19 6l20 36" f="#fff" /><P d="M2 50 16 34l10 8L38 28l15 23Z" f={SKY} s={BLUE} /><P d="M1.500 30v22.500H54" /></>,
  <><P d="M2 10 16 22 32 8l10 10 12-6v30l-12-8-10 10L20 30 2 40Z" f={SKY} s="none" sw={0} /><P d="M2 8l14 14L32 6l10 12h12M2 32l14 14 14-16 10 8 14 6" s={BLUE} />{axes}</>,
  <><P d="M2 8h52v24L44 44 34 32 24 44 2 22Z" f={SKY} s="none" sw={0} /><P d="M2 8h52M2 24l20 20 12-14 10 12 10-12" s={BLUE} />{axes}</>,
  <><R x={12} y={6} w={11} h={28} f={SKY} s={BLUE} /><R x={12} y={34} w={11} h={18} /><R x={36} y={8} w={11} h={20} f={SILVER} s={GREY} /><R x={36} y={28} w={11} h={24} /><P d="M2 46 18 28l14 12 22-16" />{axes}</>,
  <><R x={10} y={26} w={11} h={26} f={SKY} s={BLUE} /><R x={22} y={4} w={13} h={48} /><R x={36} y={16} w={11} h={36} f={SILVER} s={GREY} /><P d="M2 46 16 30l14 10 24-16" />{axes}</>,
  <><P d="M2 10c14 0 14 12 24 12S38 6 52 6v14c-14 0-16 14-26 14S16 22 2 22Z" f={SILVER} s={GREY} /><P d="M2 32h10v12H2zM42 32h10v12H42z" f="#f7a13d" s="#dd7a14" /><P d="M2 26c14 0 14 18 24 18s14-18 26-18v-8C38 18 36 34 26 34S16 16 2 16Z" f={SKY} s={BLUE} />{axes}</>,
  <><R x={8} y={16} w={10} h={36} /><P d="M18 16h8v13h4M32 4v26" s={GREY} /><P d="M30 30V4h6v26Z" f={BLUE} s={BLUE} /><R x={37} y={4} w={11} h={48} />{axes}</>,
  <><R x={1.5} y={5} w={51} h={12} f={SKY} s={BLUE} /><R x={8} y={17} w={38} h={14} f={SKY} s={BLUE} /><R x={17} y={31} w={20} h={17} f={SKY} s={BLUE} /></>,
  <><path d="M9 10h9v9H9zM24 21h9v9h-9zM39 33h9v9h-9z" fill={SKY} /><path d="M39 2h9v9h-9zM9 36h9v9H9z" fill={INK} />{axes}</>,
  <><circle cx="27" cy="27" r="25.5" fill="#fff" stroke={GREY} strokeWidth="3" /><P d="M27 1.500a25.500 25.500 0 0 1 18 43.500L27 27Z" f={SKY} s={BLUE} /></>,
  <><circle cx="27" cy="27" r="18.5" fill="none" stroke={BLUE} strokeWidth="17" /><circle cx="27" cy="27" r="18.5" fill="none" stroke={SKY} strokeWidth="11" /><P d={arc(27, 27, 25.5, 11.5, -1.57, 0)} f="#fff" s={GREY} /></>,
  <><R x={1.5} y={1.5} w={51} h={51} /><R x={1.5} y={1.5} w={23} h={26} f={SKY} s={BLUE} /><R x={1.5} y={27.5} w={23} h={25} f={SKY} s={BLUE} /><P d="M24.500 18h28M38 18v34M38 36h14" /></>,
  <><circle cx="30" cy="21" r="17" fill="#fff" stroke={INK} strokeWidth="3" /><path d="M20 10 30 6l4 8-6 8-8-2zM34 22l10-8 2 10-8 10-6-4zM20 26l8 4-2 6-6-4z" fill="#2a9d4e" /><P d="M10 14c-6 14 6 30 24 30M30 44v8M14 52h34" s={GREY} /></>,
  <><P d="M1.500 6h18l8-4h10l2 6 14-4v20L44 38l-10 10-14-2L4 32Z" f={SILVER} s={GREY} /><P d="M2 6h18l4 10-8 12H2ZM26 28h16l8-8v16l-10 12H28Z" f={SKY} s={BLUE} /></>,
  <><path d="M29-3 5 50l22-15Z" fill="#58c0ea" /><path d="M29-3 27 35l23 19Z" fill="#1c76b5" /></>,
  <><P d="M1.500 40a25.500 25.500 0 0 1 51 0H38a11 11 0 0 0-22 0Z" f="#fff" /><P d="M14 18a25.500 25.500 0 0 1 38.500 22H38a11 11 0 0 0-16-10Z" f={SKY} s={BLUE} /><P d="M38 18 24 38" sw={5} /></>,
  <><R x={1.5} y={8} w={51} h={38} />{num(6, 37)}</>,
  <><R x={1.5} y={1.5} w={51} h={51} /><P d="M12 11v14M12 30v14" s={GREY} /><path d="M16 12h28v5H16zM16 31h20v5H16z" fill={BLUE} /><P d="M16 22h14M16 41h26" s={BLUE} /></>,
  <><R x={1.5} y={6} w={51} h={40} /><P d="M10 27 18 12l8 15Z" f="#7bc47f" s="#2a9d4e" /><P d="M30 12h16l-8 15Z" f="#e84b4b" s="#c93030" /><P d="M9 36h12M25 36h5M36 36h12" s={GREY} /></>,
  <><P d="M52 26V1.500H1.500v46H26" f="#fff" /><path d="M3 3h48v7H3z" fill={SILVER} /><P d="M1.500 12h51" s={GREY} /><R x={12} y={20} w={8} h={8} s={GREY} /><R x={12} y={34} w={8} h={8} s={GREY} />{funnel}</>,
  tableGrid,
  <>{tableGrid}<P d="M2 39h50v13H2zM36 13h16v39H36z" f={SKY} s={BLUE} /><P d="M18 39v13M36 26h16M36 39h16" s={BLUE} /></>,
  <text x="9" y="43" fontFamily={UI} fontWeight="700" fontSize="46" fill="#2986c9">R</text>,
  <text x="-3" y="41" fontFamily={UI} fontWeight="700" fontSize="47" fill="#2986c9" textLength="57">Py</text>,
  <><P d="M2 10h34" s="#2a8ddb" /><circle cx="44" cy="10" r="7" fill={SKY} stroke={BLUE} strokeWidth="3" /><P d="M2 25h26M2 39h14" s={GREY} /><R x={28} y={21} w={8} h={8} s={GREY} /><R x={16} y={35} w={8} h={8} s={GREY} />{axes}</>,
  <><P d="M18 27h14M26 8v38M26 8h8M26 46h8" /><R x={1.5} y={21} w={18} h={11} f={SKY} s={BLUE} /><R x={34} y={2} w={18} h={11} f={SKY} s={BLUE} /><R x={34} y={21} w={18} h={11} f={SKY} s={BLUE} /><R x={34} y={40} w={18} h={11} f={SKY} s={BLUE} /></>,
  <P d="M1.500 6h51v34H22L10 51V40H1.500Z" f="#fff" s={BLUE} />,
  <><P d="M8 1.500h26L46 14v38H8ZM34 1.500V14h12" f="#fff" /><path d="M1 15h13v12H1z" fill={SKY} stroke={BLUE} strokeWidth="3" /><P d="M20 24h18M16 36h8M28 36h10" s="#2a8ddb" /></>,
  <><P d="M14 2h26v22c0 7-6 11-13 11s-13-4-13-11ZM14 8H2c0 12 4 18 14 18M40 8h12c0 12-4 18-14 18M27 35v8" f="#fff" /><R x={15} y={44} w={24} h={8} f={SKY} s={BLUE} /></>,
  <><P d="M7 1.500h26L48 16v36.500H7ZM33 1.500V16h15" f="#f7f6f5" sw={4} /><path d="M13 34h7v13h-7zM23 40h7v7h-7zM36 27h7v20h-7z" fill={INK} /></>,
  <><R x={1.5} y={8} w={51} h={38} />{num(11, 37)}{bolt}</>,
  <><P d="M52 26V8H1.500v40H26" f="#fff" /><path d="M3 9h48v6H3z" fill={SILVER} /><R x={12} y={36} w={8} h={7} s={GREY} />{funnel}{bolt}</>,
  <><R x={1.5} y={1.5} w={51} h={51} f="#eaf4fd" s={BLUE} /><P d="M52 16 38 14l-4 14-14 8-6 16h12l14-14 12-2Z" f={SKY} s={BLUE} /><path d="M0-2h18v22L9 32 0 20z" fill="#dd6b10" /><circle cx="9" cy="9" r="3.5" fill="#fff" /><path d="M37 29h18v26H37z" fill="#f3f2f1" /><circle cx="51" cy="35" r="5" fill="#dd6b10" /><circle cx="48" cy="49" r="7" fill="#dd6b10" /></>,
  <><P d="M20 2h14l18 25-18 25H20L2 27Z" f="#fff" s="#9b4f9f" /><P d="m27 2 11 12-11 12-11-12ZM27 28l11 12-11 12-11-12ZM14 15l12 12-12 12L3 27ZM40 15l12 12-12 12-12-12Z" s="#9b4f9f" /></>,
  <><P d="M2 8h33l17 19-17 19H2l16-19Z" f="#fff" s="#2276d2" /><P d="M20 8 37 27M2 46 24 18M18 46 38 22" s="#2276d2" /></>,
];

const DoubleChevron = ({ flip }) => (
  <svg width="13" height="14" viewBox="0 0 13 14" fill="none" stroke={INK} strokeWidth="1.2">
    <path d={flip ? "M6.500 1 1 7l5.500 6M12 1 6.500 7l5.500 6" : "M1 1l5.500 6L1 13M6.500 1 12 7l-5.500 6"} />
  </svg>
);
const Lens = ({ size, color, left }) => (
  <svg width={size} height={size} viewBox="0 0 16 16" fill="none" stroke={color} strokeWidth="1.2">
    <g transform={left ? "matrix(-1 0 0 1 16 0)" : undefined}>
      <circle cx="6.5" cy="6.5" r="5" /><path d="m10 10.200 5 5" />
    </g>
  </svg>
);
const GridIcon = () => (
  <svg width="12" height="12" viewBox="0 0 12 12" fill="none" stroke={INK}>
    <rect x=".6" y=".6" width="10.8" height="10.8" rx="1.5" /><path d="M.6 4.200h10.800M.6 7.800h10.800M4.200.6v10.800M7.800.6v10.800" />
  </svg>
);

export default function App() {
  const menu = [["File", 20, 38], ["Home", 38, 32], ["Insert", 34, 32], ["Modeling", 59, 32], ["View", 29, 31], ["Optimize", 56, 32], ["Help", 28, 0]];
  const tables = [["Customers", 56], ["Orders", 36], ["Products", 47], ["Region_Map", 66]];
  return (
    <Shell>
      <Global />
      <TitleBar>
        <TitleLeft>
          <svg width="78" height="18" viewBox="0 0 78 18" fill="none">
            <path d="M2 1.500h14.500v15H4L2 14.500ZM4.500 2v6.500h10V2M6 16.500v-5h7v5M8.500 14v2" stroke="#c8c6c4" strokeWidth="1.3" />
            <path d="M33 1v6h6M33.500 6.500c4-5.500 12-4 12 1.500 0 2-1 3.500-6.500 8.500" stroke="#797775" strokeWidth="1.2" />
            <path d="M75 1v6h-6M74.500 6.500c-4-5.500-12-4-12 1.500 0 2 1 3.500 6.500 8.500" stroke="#797775" strokeWidth="1.2" />
          </svg>
          <TitleText>
            <Text w={345} lh={18}>Sales Performance Dashboard • Last saved: 7/16/2025 at 2:11 PM</Text>
            <svg width="9" height="12" viewBox="0 0 9 12"><path d="M.5 1h8l-4 4.500z" fill="#fff" /></svg>
          </TitleText>
        </TitleLeft>
        <TopSearch>
          <Lens size={17} color={INK} left />
          <Text w={42} size={13} color="#2b6659">Search</Text>
        </TopSearch>
        <TitleRight>
          <Text w={36}>Sign in</Text>
          <Spacer $w={10} />
          <svg width="20" height="22" viewBox="0 0 20 22">
            <circle cx="10" cy="10.5" r="10" fill="#f3f2f1" />
            <g fill="none" stroke={INK} strokeWidth="1.5"><circle cx="10" cy="6.5" r="2.8" /><path d="M5 11.500h10v1.500a5 4 0 0 1-10 0Z" /></g>
          </svg>
          <Spacer $w={32} />
          <svg width="98" height="12" viewBox="0 0 98 12" fill="none" stroke="#fff" strokeWidth="1.1">
            <path d="M0 6.500h10M88.500 1l10 10M98 1 88.500 11" /><rect x="44.5" y="1.5" width="9" height="9" />
          </svg>
        </TitleRight>
      </TitleBar>

      <Menu>
        {menu.map(([t, w, gap]) => (
          <MenuTab key={t} $w={w} $gap={gap} $on={t === "Home"}>
            <Text w={w} size={13} lh={20} weight={t === "Home" ? 600 : 400}>{t}</Text>
          </MenuTab>
        ))}
        <Spacer />
        <ShareButton>
          <svg width="18" height="16" viewBox="0 0 18 16" fill="none" stroke="#fff" strokeWidth="1.1">
            <path d="M1.500 4.500v10h12V12M4 11c.5-5 3-7 7-7V1l6 5-6 5V8c-3 0-5 .5-7 3Z" />
          </svg>
          <Spacer $w={7} />
          <Text w={30} size={12}>Share</Text>
          <Spacer />
          <Chevron size={10} color="#fff" />
        </ShareButton>
      </Menu>

      <Ribbon>
        <RibbonGroup w={158} pad={5} name="Clipboard" nameWidth={43}>
          <Button $w={40} $off>
            <svg width="40" height="34" viewBox="0 0 40 34" fill="none" stroke="#bebbb8">
              <path d="M17 5.500h-7v24h12M24 5.500h5V13" stroke="#f4cf9f" strokeWidth="1.4" />
              <path d="M14 7.500v-3h3.500c0-3 5-3 5 0H26v3Z" fill="#fafafa" /><path d="M22.500 14.500h13v16h-13z" fill="#fafafa" strokeWidth="1.2" />
            </svg>
            <ButtonLine><Text w={28}>Paste</Text></ButtonLine>
          </Button>
          <SideActions>
            <SideAction>
              <svg width="16" height="18" viewBox="-3 0 16 18" fill="none" stroke="#a5a3a1"><path d="M2 1l7 11M9 1 2.500 12" /><g stroke="#9ccbe8"><rect x=".5" y="12.5" width="3.5" height="3.5" /><rect x="7" y="12.5" width="3.5" height="3.5" /></g></svg>
              <Text w={19} color="#c8c6c4">Cut</Text>
            </SideAction>
            <SideAction>
              <svg width="16" height="17" viewBox="0 0 16 17" fill="none" stroke="#bebbb8"><path d="M5 12.500H.5v-12h7.500V3M5.500 4.500h6l4 4v8h-10ZM11 4.500v4h4.500M8 11h5M8 13.500h5" /></svg>
              <Text w={28} color="#c8c6c4">Copy</Text>
            </SideAction>
            <SideAction>
              <svg width="16" height="17" viewBox="0 0 16 17" fill="none" stroke="#bebbb8"><path d="M1 7l5-2 5 5-3 6-3-1-2-3Z" fill="#fae5c8" stroke="#f0c790" /><path d="M6.500 4.500 9 2l5 5-2.500 2.500ZM11 4l3-3 1.500 1.500-3 3" /></svg>
              <Text w={78} color="#c8c6c4">Format painter</Text>
            </SideAction>
          </SideActions>
        </RibbonGroup>
        <RibbonGroup w={370} pad={4} name="Data" nameWidth={20}>
          <RibbonButton w={48} icon="get" arrow lines={[["Get", 19], ["data", 23]]} />
          <RibbonButton w={49} icon="excel" lines={[["Excel", 26], ["workbook", 53]]} />
          <RibbonButton w={72} icon="onelake" arrow lines={[["OneLake", 46], ["data hub", 46]]} />
          <RibbonButton w={30} icon="sql" lines={[["SQL", 21], ["Server", 33]]} />
          <RibbonButton w={50} icon="enter" lines={[["Enter", 27], ["data", 23]]} />
          <RibbonButton w={47} icon="dataverse" lines={[["Dataverse", 52]]} />
          <RibbonButton w={64} icon="recent" arrow lines={[["Recent", 36], ["sources", 39]]} />
        </RibbonGroup>
        <RibbonGroup w={117} pad={8} name="Queries" nameWidth={34}>
          <RibbonButton w={55} icon="transform" arrow lines={[["Transform", 52], ["data", 23]]} />
          <RibbonButton w={46} icon="refresh" lines={[["Refresh", 39]]} />
        </RibbonGroup>
        <RibbonGroup w={147} pad={8} name="Insert" nameWidth={25}>
          <RibbonButton w={39} icon="newVisual" lines={[["New", 24], ["visual", 30]]} />
          <RibbonButton w={40} icon="textBox" lines={[["Text", 21], ["box", 19]]} />
          <RibbonButton w={49} icon="moreVisuals" arrow lines={[["More", 28], ["visuals", 34]]} />
        </RibbonGroup>
        <RibbonGroup w={115} pad={8} name="Calculations" nameWidth={53}>
          <RibbonButton w={49} icon="measure" lines={[["New", 24], ["measure", 45]]} />
          <RibbonButton w={50} icon="quick" lines={[["Quick", 31], ["measure", 45]]} />
        </RibbonGroup>
        <RibbonGroup w={74} name="Sensitivity" nameWidth={44}>
          <RibbonButton w={60} icon="sensitivity" off arrow lines={[["Sensitivity", 53], [null, 0]]} />
        </RibbonGroup>
        <RibbonGroup w={60} name="Share" nameWidth={25}>
          <RibbonButton w={50} icon="publish" lines={[["Publish", 38]]} />
        </RibbonGroup>
        <RibbonGroup w={59} name="Copilot" nameWidth={32}>
          <RibbonButton w={50} icon="copilot" lines={[["Copilot", 39]]} />
        </RibbonGroup>
        <CollapseSlot><Chevron size={10} sw={1.6} dir="up" /></CollapseSlot>
      </Ribbon>

      <Main>
        <Center>
          <Stage>
            <Rail>
              <RailSlot><svg width="16" height="17" viewBox="0 0 16 17" fill="none" stroke="#000"><path d="M1.500 2.500v13H15M3.500 4.500h2V13.500h-2ZM7.500 7.500h2v6h-2ZM11.500 3.500h2v10h-2Z" /></svg></RailSlot>
              <RailSlot><svg width="17" height="17" viewBox="0 0 17 17" fill="none" stroke="#605e5c"><path d="M.5 1.500h15v14H.5ZM.5 4.500h15M.5 8.500h15M.5 12h15M5.500 4.500v11M10.500 4.500v11" /></svg></RailSlot>
              <RailSlot><svg width="19" height="19" viewBox="0 0 19 19" fill="none" stroke="#797775"><path d="M.5 5.500h7v7h-7ZM.5 8h7M11 .5h7v7h-7ZM11 3h7M11 11.500h7v6.500h-7ZM11 14h7M11 3H4v2.500M4 12.500V15h7" /></svg></RailSlot>
              <RailSlot><svg width="18" height="17" viewBox="0 0 18 17" fill="none" stroke="#797775"><path d="M4.500 9V1.500h6l4 4V14M10.500 1.500v4h4M17 7v7l-3 2" /><text x="0" y="16.5" fontFamily={UI} fontSize="6.5" fill="#605e5c" stroke="none" textLength="13">DAX</text></svg></RailSlot>
            </Rail>
            <Report>
              <Row $h={45} $m="0 0 0 23px">
                <Banner><Text size={20.5} weight={600} w={281} lh={32} color="#6cb2f7">Sales Performance Dashboard</Text></Banner>
                <SlicerBox w={113} ml={44} label="Region" lw={32} line="#d5cdd2" bg="#0a0809" />
                <SlicerBox w={158} ml={12} label="Order Date" lw={50} line="#0d0a0c" bg="#000" />
                <SlicerBox w={113} ml={11} label="Category" lw={42} line="#d5cdd2" bg="#22161c" />
              </Row>
              <Row $h={102} $m="23px 0 0 23px"><LineCard><SalesLine /></LineCard></Row>
              <Row $h={136} $m="11px 0 0 12px"><BarCard><ProductBars /></BarCard></Row>
              <Row $h={169} $m="22px 0 0 23px">
                <RegionCard>
                  <Text size={11.5} weight={600} w={83} lh={16} color="#252423">Sales by Region</Text>
                  <MapCard>
                    <Text din size={11.5} w={113} lh={14}>Total Profit by Region</Text>
                    <RegionMap />
                  </MapCard>
                </RegionCard>
                <KpiBox w={102} ml={33} r={6} bg="#614963" label="Total sales" lw={41} value="269K" vw={86} inset={2} />
                <KpiBox w={91} ml={22} r={4} bg="#2ecb2c" label="Total profit" lw={45} value="51K" vw={66} inset={8} />
                <KpiBox w={102} ml={11} r={3} bg="#118dff" label="Avg Order Value" lw={66} value="537..." vw={85} inset={4} />
                <KpiBox w={91} ml={22} r={3} bg="#c8383f" label="Profit Margin" lw={54} value="0.19" vw={69} inset={5} />
                <CategoryCard><CategoryDonut /></CategoryCard>
              </Row>
            </Report>
            <FilterPane>
              <DoubleChevron flip />
              <FilterIcon>
                <svg width="12" height="13" viewBox="0 0 12 13" fill="none" stroke={INK} strokeWidth="1.2"><path d="M11.400.8v11.400L6 8H1V5h5Z" /></svg>
              </FilterIcon>
              <FilterLabel>Filters</FilterLabel>
            </FilterPane>
          </Stage>
          <TabBar>
            <Spacer $w={48} />
            <LayoutButton $w={24} $on $top={7}>
              <svg width="20" height="16" viewBox="0 0 20 16" fill="none" stroke="#605e5c" strokeWidth="1.2"><path d="M.6.600h17.800v11H.6ZM9.500 12v2M6 13.500h7" /></svg>
            </LayoutButton>
            <Spacer $w={25} />
            <LayoutButton $w={13} $top={5}>
              <svg width="13" height="20" viewBox="0 0 13 20" fill="none" stroke="#605e5c" strokeWidth="1.2"><rect x=".6" y=".6" width="11.8" height="18.8" rx="1" /><path d="M5 16.500h3" /></svg>
            </LayoutButton>
            <Spacer $w={21} />
            <svg width="28" height="35" viewBox="0 0 28 35" fill="#c8c6c4"><path d="M5 13.500v9L.5 18zM22.500 13.500v9L27 18z" /></svg>
            <Spacer $w={6} />
            <PageTab $w={109} $on>
              <Text size={12} weight={500} w={67}>Report page</Text>
              <CloseMark>x</CloseMark>
            </PageTab>
            <PageTab $w={122}><Text size={12} w={81}>Product-details</Text></PageTab>
            <AddTab><svg width="11" height="11" viewBox="0 0 11 11" stroke="#fff" strokeWidth="2.5"><path d="M5.500 0v11M0 5.500h11" /></svg></AddTab>
          </TabBar>
        </Center>

        <Pane>
          <PaneHead $r={8}><Text size={14} weight={600} w={100} lh={20}>Visualizations</Text><DoubleChevron /></PaneHead>
          <WellLabel $mt={-1}><Text weight={600} size={11.5} w={62}>Build visual</Text></WellLabel>
          <ModeRow>
            <Mode $on>
              <svg width="24" height="26" viewBox="0 0 24 26"><path d="M0 2.500h19" stroke={INK} /><g fill={GREEN} stroke="#222" strokeWidth="1.2" strokeDasharray="2 1.2"><rect x=".6" y="7" width="22.8" height="7" /><rect x=".6" y="18" width="22.8" height="7" /></g></svg>
            </Mode>
            <Mode>
              <svg width="26" height="26" viewBox="0 0 26 26" fill="none" stroke={INK} strokeWidth="1.2"><path d="M5 24.500H1.500v-23h10l6 6v3M11.500 1.500v6h6M24.500 9.500 15 19l-2-1.500 11.500-8M13 17.500c-3 0-3 5-5.500 6 4 1.500 7-1 7.500-4.500" /></svg>
            </Mode>
          </ModeRow>
          <svg width="180" height="10" viewBox="0 0 180 10" fill="none" stroke="#8a8886"><path d="M0 9.500h15.500L24 1.500 32.500 9.500H180" /></svg>
          <Gallery>
            {gallery.map((art, i) => <svg key={i} width="18" height="18" viewBox="0 0 54 54" overflow="visible">{art}</svg>)}
          </Gallery>
          <Dots><i /><i /><i /></Dots>
          <Wells>
            <WellLabel $mb={5}><Text size={11.5} w={34}>Values</Text></WellLabel>
            <Well $h={28} $p="6px 0 0 10px"><Text size={11.5} w={107} color="#252423">Add data fields here</Text></Well>
            <WellLabel $mt={10} $mb={8}><Text size={11.5} w={38}>Tooltip</Text></WellLabel>
            <WellLabel $mb={10}>
              <Text size={11.5} w={74} color="#252423">Keep all filters</Text>
              <Toggle><Text size={9} w={12} color="#979593">On</Text><i /></Toggle>
            </WellLabel>
            <Well $h={57} $p="2px">
              <FieldCard>
                <FieldTop>
                  <svg width="9" height="12" viewBox="0 0 9 12"><rect width="9" height="12" fill="#a19f9d" /><path d="M1.500 1.500h6v2h-6zM1.500 5h1.200v1H1.500zM4 5h1.200v1H4zM6.500 5h1.200v1H6.500zM1.500 7.200h1.200v1H1.500zM4 7.200h1.200v1H4zM6.500 7.200h1.200v1H6.500zM1.500 9.400h1.200v1H1.500zM4 9.400h1.200v1H4zM6.500 9.400h1.200v1H6.500z" fill="#fff" /></svg>
                  <Spacer $w={6} />
                  <Text size={11.5} w={58} color="#252423">Total Profit</Text>
                  <Spacer />
                  <svg width="30" height="14" viewBox="0 -1 30 14" fill="none" stroke={INK}><path d="m1 3.500 8 8M9 3.500l-8 8M20.500 6.500h9v6h-9ZM22.500 6.500V4c0-3 5-3 5 0v2.500" /></svg>
                </FieldTop>
                <Text size={11.5} w={32} lh={20} color="#252423">is (All)</Text>
              </FieldCard>
            </Well>
          </Wells>
        </Pane>

        <Pane>
          <PaneHead $r={8}><Text size={14} weight={600} w={34} lh={20}>Data</Text><DoubleChevron /></PaneHead>
          <SearchBox><Lens size={15} color="#605e5c" /><Text size={12} w={42} color="#616161">Search</Text></SearchBox>
          <Tables>
            {tables.map(([t, w]) => (
              <TableRow key={t}>
                <Chevron size={12} color="#605e5c" sw={1} dir="right" />
                <Spacer $w={4} /><GridIcon /><Spacer $w={6} />
                <Text size={11.5} w={w}>{t}</Text>
              </TableRow>
            ))}
          </Tables>
        </Pane>
      </Main>

      <Status>
        <Text w={60} size={11.5}>Page 1 of 2</Text>
        <Spacer />
        <svg width="124" height="14" viewBox="0 0 124 14" fill="none" stroke="#605e5c">
          <path d="M0 6.500h4.500" strokeWidth="1.5" /><path d="M8 6.500h100M58.500 4v5M113.500 6.500h8M117.500 2.500v8" /><path d="M42 1v11" strokeWidth="4" />
        </svg>
        <Spacer $w={11} />
        <Text w={23} size={11} color="#605e5c">71%</Text>
        <Spacer $w={19} />
        <svg width="16" height="12" viewBox="0 0 16 12" fill="none" stroke="#605e5c"><rect x=".5" y=".5" width="15" height="11" /><path d="M3 5V3h2M11 3h2v2M3 7v2h2M11 9h2V7" stroke="#2d7d46" /></svg>
        <Spacer $w={14} />
        <Text w={192} size={12}>Update available (click to download)</Text>
        <Spacer $w={4} />
      </Status>
    </Shell>
  );
}
